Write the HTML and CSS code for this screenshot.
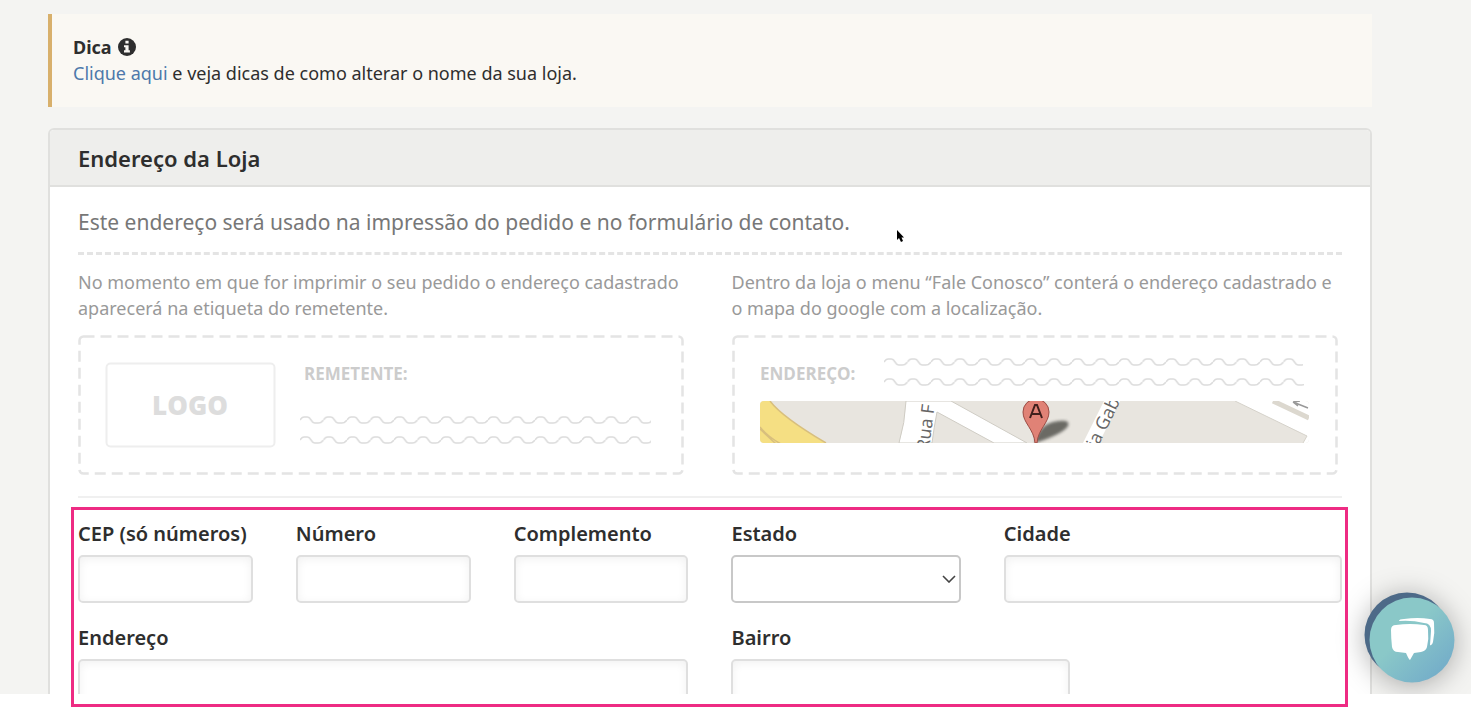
FILE: index.html
```html
<!DOCTYPE html>
<html lang="pt-BR">
<head>
<meta charset="utf-8">
<title>Endereço da Loja</title>
<link rel="stylesheet" href="styles.css">
</head>
<body>
<main class="app">
  <aside class="tip">
    <strong class="tip-title">Dica
      <svg class="tip-icon" viewBox="0 0 18 18" aria-hidden="true">
        <circle cx="9" cy="9" r="9" fill="#2e2e2e"/>
        <path d="M7.4 2.8h3.2v2.7H7.4zM6 7.2h4.6v5h1.3v2.2H6v-2.2h1.4V9.3H6z" fill="#faf8f3"/>
      </svg>
    </strong>
    <p class="tip-text"><a href="#dicas">Clique aqui</a> e veja dicas de como alterar o nome da sua loja.</p>
  </aside>

  <section class="panel">
    <h2 class="panel-title">Endereço da Loja</h2>
    <div class="panel-body">
      <p class="lead">Este endereço será usado na impressão do pedido e no formulário de contato.</p>
      <div class="grid previews">
        <div class="preview span-12">
          <p class="preview-text">No momento em que for imprimir o seu pedido o endereço cadastrado aparecerá na etiqueta do remetente.</p>
          <svg class="sketch" width="606" height="140" viewBox="0 0 606 140" role="img" aria-label="Etiqueta do remetente">
            <defs>
              <pattern id="wave" width="23.5" height="8" patternUnits="userSpaceOnUse">
                <path d="M0 4C1.500 1.500 2.500 1 4 1H7.500C11 1 11 7 14.500 7H18.500C21 7 22 6 23.500 4" fill="none" stroke="#dcdcdc" stroke-width="1.500"/>
              </pattern>
            </defs>
            <rect class="dashes" x="1.500" y="1.500" width="603" height="137" rx="4"/>
            <rect x="28.500" y="28.500" width="168" height="83" rx="4" fill="#fff" stroke="#eee" stroke-width="2"/>
            <text class="sketch-logo" x="112" y="80" text-anchor="middle">LOGO</text>
            <text class="sketch-label" x="226" y="45">REMETENTE:</text>
            <rect width="351" height="8" fill="url(#wave)" transform="translate(222 81)"/>
            <rect width="351" height="8" fill="url(#wave)" transform="translate(222 101)"/>
          </svg>
        </div>
        <div class="preview span-12">
          <p class="preview-text">Dentro da loja o menu “Fale Conosco” conterá o endereço cadastrado e o mapa do google com a localização.</p>
          <svg class="sketch" width="606" height="140" viewBox="0 0 606 140" role="img" aria-label="Mapa com o endereço">
            <defs>
              <clipPath id="map"><rect x="28" y="66" width="549" height="42" rx="4"/></clipPath>
              <filter id="soft"><feGaussianBlur stdDeviation="1.500"/></filter>
            </defs>
            <rect class="dashes" x="1.500" y="1.500" width="603" height="137" rx="4"/>
            <text class="sketch-label" x="28" y="45">ENDEREÇO:</text>
            <rect width="419" height="8" fill="url(#wave)" transform="translate(152 23)"/>
            <rect width="420" height="8" fill="url(#wave)" transform="translate(152 43)"/>
            <g clip-path="url(#map)">
              <rect x="28" y="66" width="549" height="42" fill="#e8e5df"/>
              <path d="M28 66H38Q50 82 93 108H28Z" fill="#f5df83"/>
              <path d="M38 66Q50 82 94 108M28 92Q36 102 49 109M28 94L44 109" fill="none" stroke="#d8bf7d" stroke-width="1.500"/>
              <path d="M174 66H219L295 108H262L205 77Q202 92 200 108H167Q173 88 174 66Z" fill="#fff" stroke="#cfccc4"/>
              <path d="M372 66H388L367 108H351Z" fill="#fff"/>
              <path d="M503 66L575 101L571 108V112H582V60H503Z" fill="#fff" stroke="#d5d2ca"/>
              <path d="M541 66L577 83" stroke="#dcd8cf" stroke-width="5"/>
              <path d="M561 67L576 73M561 67L568 66M561 67L566 71" fill="none" stroke="#999" stroke-width="1.500"/>
              <text class="street" transform="translate(197 116) rotate(-83)">Rua F</text>
              <text class="street" transform="translate(365 114) rotate(-64)">ia Gab</text>
              <path d="M303 108Q306 91 321 87Q339 83 336 91Q331 99 303 108Z" fill="#55544f" opacity=".85" filter="url(#soft)"/>
              <path d="M303 108C302 94 291 88 291 77A13 13 0 0 1 317 77C317 88 306 94 305 108Z" fill="#e08276" stroke="#9b4d45"/>
              <path d="M298 83L303 70H305L310 83M300 79H308" fill="none" stroke="#40201d" stroke-width="2"/>
            </g>
          </svg>
        </div>
      </div>

      <form class="grid form">
        <div class="field span-4"><label for="cep">CEP (só números)</label><input id="cep" type="text"></div>
        <div class="field span-4"><label for="numero">Número</label><input id="numero" type="text"></div>
        <div class="field span-4"><label for="complemento">Complemento</label><input id="complemento" type="text"></div>
        <div class="field span-5">
          <label for="estado">Estado</label>
          <div class="select">
            <select id="estado"><option></option></select>
            <svg viewBox="0 0 14 8" aria-hidden="true"><path d="M1 1L7 7L13 1" fill="none" stroke="#444" stroke-width="1.600"/></svg>
          </div>
        </div>
        <div class="field span-7"><label for="cidade">Cidade</label><input id="cidade" type="text"></div>
        <div class="field span-12"><label for="endereco">Endereço</label><input id="endereco" type="text"></div>
        <div class="field span-7"><label for="bairro">Bairro</label><input id="bairro" type="text"></div>
      </form>
    </div>
  </section>

  <button class="chat" type="button" aria-label="Abrir chat">
    <svg viewBox="0 0 92 92" aria-hidden="true">
      <defs><linearGradient id="teal" x1="0" y1="0.200" x2="0.800" y2="1"><stop offset=".4" stop-color="#8ac8c8"/><stop offset="1" stop-color="#73acc9"/></linearGradient></defs>
      <circle cx="43" cy="43" r="42.500" fill="#4d6a88"/>
      <circle cx="48" cy="48" r="42.500" fill="url(#teal)"/>
      <path d="M35 29Q35 27 40 27Q54 25 66 27Q70 27 70 31Q71 41 69 50Q68 54 66 53L67 39Q67 31 60 31Q48 28 35 29Z" fill="#fff"/>
      <path d="M32 33Q46 31 60 33Q64 33 64 38Q65 47 63 55Q62 59 57 60L50 61L46 68Q45 68 42 61L34 60Q29 60 28 55Q27 46 27 38Q27 33 32 33Z" fill="#fff"/>
    </svg>
  </button>
</main>
<div class="highlight"></div>
<svg class="cursor" viewBox="0 0 8 14" aria-hidden="true"><path d="M1 1V11L3 9L5 13L7 12L5.500 8.500H8Z" fill="#000"/></svg>
</body>
</html>
```

FILE: styles.css
```css
* { box-sizing: border-box; }

body {
  position: relative;
  height: 100vh;
  margin: 0;
  overflow: hidden;
  background: #fff;
  color: #2e2e2e;
  font: 18px/26px "Noto Sans", sans-serif;
}

p, h2 { margin: 0; }

.app {
  position: relative;
  height: calc(100vh - 13px);
  padding: 14px 99px 0 48px;
  overflow: hidden;
  background: #f4f4f2;
}

.tip {
  padding: 20px 21px 21px;
  border-left: 4px solid #d8b06c;
  background: #faf8f3;
}

.tip-title {
  display: flex;
  align-items: center;
  gap: 6px;
}

.tip-icon { width: 18px; height: 18px; }

.tip a { color: #4d79ab; text-decoration: none; }

.panel {
  margin-top: 21px;
  border: 2px solid #e0e0de;
  border-radius: 6px 6px 0 0;
  background: #fff;
}

.panel-title {
  padding: 13px 28px 12px;
  border-bottom: 2px solid #e0e0de;
  border-radius: 4px 4px 0 0;
  background: #eeeeec;
  font-size: 22px;
  font-weight: 600;
  line-height: 30px;
}

.panel-body { padding: 19px 28px; }

.lead {
  padding-bottom: 14px;
  border-bottom: 3px dashed #e4e4e4;
  color: #777;
  font-size: 21px;
  line-height: 32px;
}

.grid {
  display: grid;
  grid-template-columns: repeat(24, minmax(0, 1fr));
  column-gap: 43px;
}

.span-4 { grid-column: span 4; }
.span-5 { grid-column: span 5; }
.span-7 { grid-column: span 7; }
.span-12 { grid-column: span 12; }

.previews {
  padding: 14px 0 21px;
  border-bottom: 2px solid #f0f0f0;
}

.preview-text { color: #999; }

.sketch {
  display: block;
  max-width: 100%;
  margin-top: 14px;
  font-family: "Open Sans", sans-serif;
}
.dashes { fill: none; stroke: #e4e4e4; stroke-width: 2.5px; stroke-dasharray: 11 6; }
.sketch-logo { fill: #ddd; font-size: 26px; font-weight: 800; }
.sketch-label { fill: #ccc; font-size: 17px; font-weight: 700; }
.street { fill: #666; font-size: 18px; }

.form { row-gap: 22px; padding-top: 23px; }

.field { display: grid; gap: 8px; }
.field label { font-size: 20px; font-weight: 600; }

.field input,
.field select {
  width: 100%;
  height: 48px;
  padding: 0 12px;
  border: 2px solid #dfdfdf;
  border-radius: 5px;
  background: #fff;
  box-shadow: inset 0 2px 10px #0000000f;
  font: inherit;
}

.select { display: grid; align-items: center; }
.select > * { grid-area: 1 / 1; }
.select select { appearance: none; border-color: #c8c8c8; box-shadow: none; }
.select svg { width: 14px; height: 8px; margin-right: 5px; justify-self: end; pointer-events: none; }

.chat {
  position: absolute;
  right: 15px;
  bottom: 10px;
  width: 92px;
  height: 92px;
  padding: 0;
  border: 0;
  background: none;
  filter: drop-shadow(0 3px 14px #00000050);
}
.chat svg { display: block; }

.highlight {
  position: absolute;
  top: 507px;
  right: 123px;
  bottom: 0;
  left: 71px;
  border: 3px solid #ee2b83;
  pointer-events: none;
}

.cursor {
  position: absolute;
  top: 229px;
  left: 896px;
  width: 8px;
  height: 14px;
}
```
